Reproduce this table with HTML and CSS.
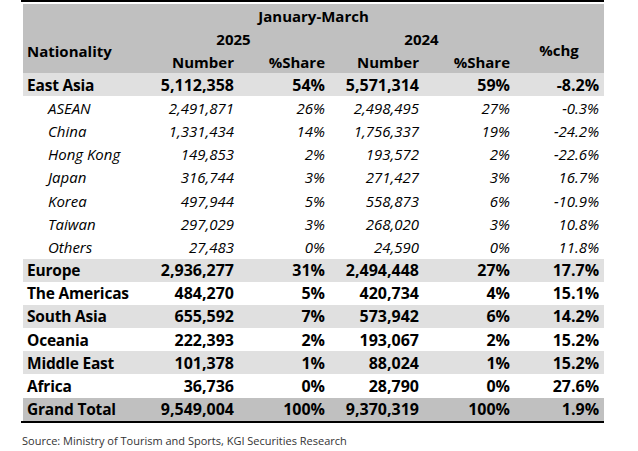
FILE: index.html
```html
<!DOCTYPE html>
<html>
<head>
<meta charset="utf-8">
<link rel="stylesheet" href="styles.css">
</head>
<body>
<div class="wrap">
  <table class="tbl">
    <colgroup>
      <col class="c1"><col class="c2"><col class="c3"><col class="c4"><col class="c5"><col class="c6">
    </colgroup>
    <thead>
      <tr class="hd"><th colspan="6" class="center">January-March</th></tr>
      <tr class="hd">
        <th rowspan="2" class="left nat">Nationality</th>
        <th colspan="2" class="center">2025</th>
        <th colspan="2" class="center">2024</th>
        <th rowspan="2" class="center">%chg</th>
      </tr>
      <tr class="hd">
        <th class="num">Number</th><th class="num">%Share</th>
        <th class="num">Number</th><th class="num">%Share</th>
      </tr>
    </thead>
    <tbody>
      <tr class="main shade"><td class="name">East Asia</td><td>5,112,358</td><td>54%</td><td>5,571,314</td><td>59%</td><td>-8.2%</td></tr>
      <tr class="sub"><td class="name">ASEAN</td><td>2,491,871</td><td>26%</td><td>2,498,495</td><td>27%</td><td>-0.3%</td></tr>
      <tr class="sub"><td class="name">China</td><td>1,331,434</td><td>14%</td><td>1,756,337</td><td>19%</td><td>-24.2%</td></tr>
      <tr class="sub"><td class="name">Hong Kong</td><td>149,853</td><td>2%</td><td>193,572</td><td>2%</td><td>-22.6%</td></tr>
      <tr class="sub"><td class="name">Japan</td><td>316,744</td><td>3%</td><td>271,427</td><td>3%</td><td>16.7%</td></tr>
      <tr class="sub"><td class="name">Korea</td><td>497,944</td><td>5%</td><td>558,873</td><td>6%</td><td>-10.9%</td></tr>
      <tr class="sub"><td class="name">Taiwan</td><td>297,029</td><td>3%</td><td>268,020</td><td>3%</td><td>10.8%</td></tr>
      <tr class="sub"><td class="name">Others</td><td>27,483</td><td>0%</td><td>24,590</td><td>0%</td><td>11.8%</td></tr>
      <tr class="main shade"><td class="name">Europe</td><td>2,936,277</td><td>31%</td><td>2,494,448</td><td>27%</td><td>17.7%</td></tr>
      <tr class="main"><td class="name">The Americas</td><td>484,270</td><td>5%</td><td>420,734</td><td>4%</td><td>15.1%</td></tr>
      <tr class="main shade"><td class="name">South Asia</td><td>655,592</td><td>7%</td><td>573,942</td><td>6%</td><td>14.2%</td></tr>
      <tr class="main"><td class="name">Oceania</td><td>222,393</td><td>2%</td><td>193,067</td><td>2%</td><td>15.2%</td></tr>
      <tr class="main shade"><td class="name">Middle East</td><td>101,378</td><td>1%</td><td>88,024</td><td>1%</td><td>15.2%</td></tr>
      <tr class="main"><td class="name">Africa</td><td>36,736</td><td>0%</td><td>28,790</td><td>0%</td><td>27.6%</td></tr>
      <tr class="main total"><td class="name">Grand Total</td><td>9,549,004</td><td>100%</td><td>9,370,319</td><td>100%</td><td>1.9%</td></tr>
    </tbody>
  </table>
</div>
<p class="source">Source: Ministry of Tourism and Sports, KGI Securities Research</p>
</body>
</html>
```
FILE: styles.css
```css
html, body {
  margin: 0;
  padding: 0;
  background: #ffffff;
}
body {
  font-family: "Open Sans", "Noto Sans", sans-serif;
  color: #000;
}
.wrap {
  margin-left: 21px;
  width: 583px;
  border-top: 2px solid #000;
  border-bottom: 2px solid #000;
  padding: 2px 0 0 2px;
  box-sizing: border-box;
}
.tbl {
  border-collapse: collapse;
  table-layout: fixed;
  width: 581px;
  font-size: 15px;
}
.c1 { width: 115px; }
.c2 { width: 100px; }
.c3 { width: 91px; }
.c4 { width: 94px; }
.c5 { width: 91px; }
.c6 { width: 90px; }
.tbl th, .tbl td {
  padding: 0 4px 0 4px;
  white-space: nowrap;
  text-align: right;
  line-height: 20px;
}
.tbl td:last-child { padding-right: 5px; }
.hd { height: 23px; background: #c0c0c0; }
.hd th { font-weight: 700; }
.tbl th.center { text-align: center; }
.tbl th.left { text-align: left; }
.tbl th.nat { padding-top: 2px; }
.tbl tbody tr { height: 23.2px; }
.main td { font-weight: 700; font-size: 16px; }
.main td.name { font-size: 15.5px; letter-spacing: -0.2px; }
.sub td { font-style: italic; font-weight: 400; }
.tbl td.name { text-align: left; }
.sub td.name { padding-left: 25px; }
.shade { background: #e0e0e0; }
.total { background: #c0c0c0; }
.source {
  margin: 10px 0 0 22px;
  font-size: 11px;
  color: #333;
  line-height: 15px;
}
```
